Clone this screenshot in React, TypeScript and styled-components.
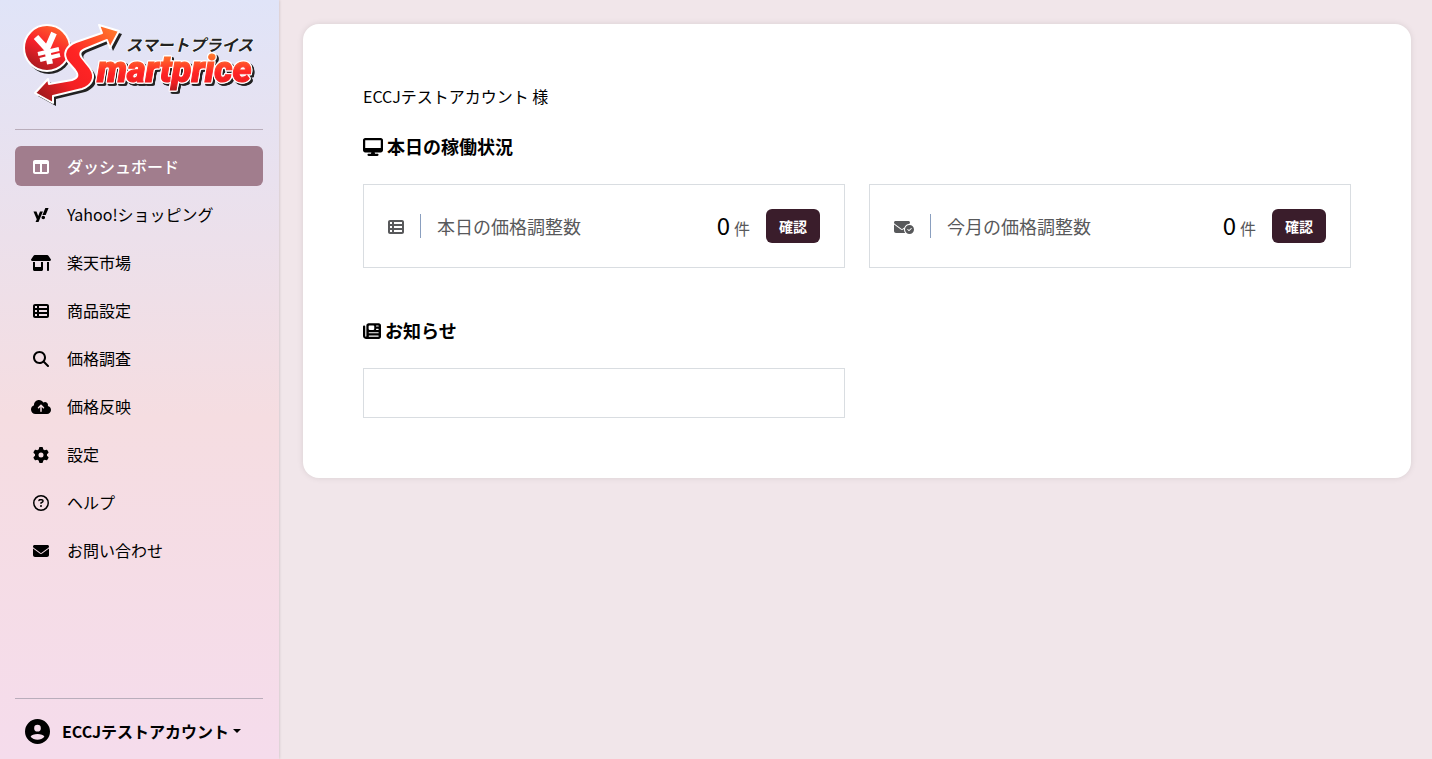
import React from 'react';
import styled, { createGlobalStyle } from 'styled-components';
import type { IconType } from 'react-icons';
import {
  FaCloudArrowUp,
  FaDesktop,
  FaEnvelope,
  FaEnvelopeCircleCheck,
  FaGear,
  FaMagnifyingGlass,
  FaNewspaper,
  FaRegCircleQuestion,
  FaShop,
  FaTableColumns,
  FaTableList,
  FaYahoo,
} from 'react-icons/fa6';

const GlobalStyle = createGlobalStyle`
  *, *::before, *::after { box-sizing: border-box; }
  body {
    margin: 0;
    background: #f1e6ea;
    color: #000;
    font-family: "Noto Sans CJK JP", "Noto Sans", sans-serif;
    font-size: 16px;
    line-height: 24px;
  }
`;

const Page = styled.div`
  display: flex;
  align-items: flex-start;
  min-height: 100vh;
`;

const Sidebar = styled.aside`
  position: sticky;
  top: 0;
  flex: 0 0 279px;
  display: flex;
  flex-direction: column;
  height: 100vh;
  padding: 20px 16px 12px 15px;
  background: linear-gradient(180deg, #e0e4f8 0%, #f5dde1 55%, #f5dcec 100%);
  box-shadow: 0 0 3px rgba(0, 0, 0, 0.2);
`;

const LogoLink = styled.a`
  display: block;
  height: 93px;
  svg { display: block; }
`;

const Divider = styled.hr`
  width: 100%;
  height: 1px;
  margin: 16px 0;
  border: 0;
  background: #b9adbb;
`;

const Nav = styled.nav`
  flex: 1;
`;

const NavList = styled.ul`
  display: flex;
  flex-direction: column;
  gap: 8px;
  margin: 0;
  padding: 0;
  list-style: none;
`;

const NavLink = styled.a<{ $active?: boolean }>`
  display: flex;
  align-items: center;
  gap: 16px;
  height: 40px;
  padding: 0 16px;
  border-radius: 6px;
  background: ${(p) => (p.$active ? '#a17d8d' : 'transparent')};
  color: ${(p) => (p.$active ? '#fff' : '#000')};
  font-weight: ${(p) => (p.$active ? 500 : 400)};
  text-decoration: none;
`;

const NavIcon = styled.span`
  display: flex;
  justify-content: center;
  width: 20px;
`;

const Glyph = styled.span<{ $width: number; $height: number }>`
  display: flex;
  flex: none;
  margin-top: 2px;
  svg {
    width: ${(p) => p.$width}px;
    height: ${(p) => p.$height}px;
  }
`;

const AccountButton = styled.button`
  display: flex;
  align-items: center;
  height: 32px;
  padding: 0 10px;
  border: 0;
  background: none;
  color: #000;
  font: inherit;
  font-weight: 700;
  cursor: pointer;
`;

const AccountName = styled.span`
  margin: 0 4px 0 12px;
`;

const Caret = styled.span`
  border-top: 4px solid currentColor;
  border-right: 4px solid transparent;
  border-left: 4px solid transparent;
`;

const Main = styled.main`
  flex: 1;
  min-width: 0;
  padding: 24px 21px 24px 24px;
`;

const Panel = styled.div`
  padding: 60px;
  border-radius: 16px;
  background: #fff;
  box-shadow: 0 0 6px rgba(0, 0, 0, 0.1);
`;

const Greeting = styled.p`
  margin: 0 0 24px;
`;

const Section = styled.section`
  & + & { margin-top: 48px; }
`;

const SectionTitle = styled.h2`
  display: flex;
  align-items: center;
  gap: 4px;
  margin: 0 0 24px;
  font-size: 18px;
  line-height: 28px;
  font-weight: 700;
`;

const Columns = styled.div`
  display: grid;
  grid-template-columns: 1fr 1fr;
  gap: 24px;
`;

const Box = styled.div`
  display: flex;
  align-items: center;
  min-height: 50px;
  padding: 24px;
  border: 1px solid #d9dde1;
`;

const StatLabel = styled.div`
  flex: 1;
  display: flex;
  align-items: center;
  gap: 16px;
  color: #58595b;
  font-size: 18px;
`;

const StatRule = styled.span`
  width: 1px;
  height: 24px;
  background: #8a9fbf;
`;

const StatValue = styled.div`
  display: flex;
  align-items: baseline;
  gap: 4px;
  margin-right: 16px;
`;

const Count = styled.span`
  font-size: 24px;
`;

const Unit = styled.span`
  color: #58595b;
`;

const ConfirmButton = styled.button`
  width: 54px;
  height: 34px;
  padding: 0;
  border: 0;
  border-radius: 6px;
  background: #3a1d2b;
  color: #fff;
  font: inherit;
  font-size: 14px;
  font-weight: 700;
  cursor: pointer;
`;

const Wordmark = styled.text`
  font-family: Roboto, sans-serif;
  font-size: 36px;
  font-weight: 900;
  font-style: italic;
  filter: drop-shadow(1px 0 0 #fff) drop-shadow(-1px 0 0 #fff) drop-shadow(0 1px 0 #fff)
    drop-shadow(0 -1px 0 #fff) drop-shadow(2px 2px 0 #222);
`;

const Tagline = styled.text`
  font-size: 16px;
  font-weight: 700;
  font-style: italic;
`;

const arrowPath =
  'M20 73 L33 59 L34 64 L57 60 C63 58 64 55 60 50 L53 42 C47 34 51 26 61 22 L87 13 L84 5 L104 11 L95 28 L92 20 L70 29 C65 31 64 34 67 38 L75 48 C82 58 76 66 67 69 L38 76 L38 83 Z';

function Logo() {
  return (
    <svg width="248" height="93" viewBox="0 0 248 93" role="img" aria-label="スマートプライス Smartprice">
      <defs>
        <linearGradient id="coin" x1="0.8" y1="0" x2="0.3" y2="1">
          <stop offset="0" stopColor="#ff6a2c" />
          <stop offset="0.5" stopColor="#f9222a" />
          <stop offset="1" stopColor="#a51a1e" />
        </linearGradient>
        <linearGradient id="arrow" gradientUnits="userSpaceOnUse" x1="100" y1="8" x2="26" y2="78">
          <stop offset="0" stopColor="#ff7a2b" />
          <stop offset="0.45" stopColor="#ff2424" />
          <stop offset="0.7" stopColor="#f42023" />
          <stop offset="1" stopColor="#9f1a1d" />
        </linearGradient>
        <linearGradient id="word" gradientUnits="userSpaceOnUse" x1="0" y1="34" x2="0" y2="72">
          <stop offset="0" stopColor="#ff7a2c" />
          <stop offset="0.5" stopColor="#ff2424" />
          <stop offset="0.75" stopColor="#f02022" />
          <stop offset="1" stopColor="#a81a1d" />
        </linearGradient>
      </defs>
      <circle cx="34" cy="31" r="23" fill="#222" />
      <circle cx="32" cy="28" r="23" fill="url(#coin)" stroke="#fff" strokeWidth="2" />
      <g fill="none" stroke="#fff">
        <path d="M21 17 L32 29 L39 13 M32 28 L35 44" strokeWidth="6" />
        <path d="M23 34 L44 29 M25 40 L45 35" strokeWidth="4" />
      </g>
      <path d={arrowPath} transform="translate(3 3)" fill="#222" />
      <path d={arrowPath} fill="url(#arrow)" stroke="#fff" strokeWidth="2" strokeLinejoin="round" />
      <Tagline x="111" y="31" fill="#222" stroke="#fff" strokeWidth="1" paintOrder="stroke">
        スマートプライス
      </Tagline>
      <Wordmark x="82" y="62" fill="url(#word)" stroke="url(#word)" strokeWidth="1">
        martprice
      </Wordmark>
    </svg>
  );
}

function AccountIcon() {
  return (
    <svg width="25" height="25" viewBox="0 0 24 24" fill="currentColor" aria-hidden="true">
      <path
        fillRule="evenodd"
        d="M12 0 A12 12 0 1 1 12 24 A12 12 0 1 1 12 0 Z M12 5.6 A3.2 3.2 0 1 0 12 12 A3.2 3.2 0 1 0 12 5.6 Z M5.4 17 C6 15.4 9 14.4 12 14.4 S18 15.4 18.6 17 C17 18.9 14.6 19.9 12 19.9 S7 18.9 5.4 17 Z"
      />
    </svg>
  );
}

const navItems: { label: string; icon: IconType; width: number; active?: boolean }[] = [
  { label: 'ダッシュボード', icon: FaTableColumns, width: 16, active: true },
  { label: 'Yahoo!ショッピング', icon: FaYahoo, width: 16 },
  { label: '楽天市場', icon: FaShop, width: 20 },
  { label: '商品設定', icon: FaTableList, width: 16 },
  { label: '価格調査', icon: FaMagnifyingGlass, width: 16 },
  { label: '価格反映', icon: FaCloudArrowUp, width: 20 },
  { label: '設定', icon: FaGear, width: 16 },
  { label: 'ヘルプ', icon: FaRegCircleQuestion, width: 16 },
  { label: 'お問い合わせ', icon: FaEnvelope, width: 16 },
];

const stats: { label: string; icon: IconType; width: number; count: number }[] = [
  { label: '本日の価格調整数', icon: FaTableList, width: 16, count: 0 },
  { label: '今月の価格調整数', icon: FaEnvelopeCircleCheck, width: 20, count: 0 },
];

export default function App() {
  return (
    <>
      <GlobalStyle />
      <Page>
        <Sidebar>
          <LogoLink href="#">
            <Logo />
          </LogoLink>
          <Divider />
          <Nav>
            <NavList>
              {navItems.map(({ label, icon: Icon, width, active }) => (
                <li key={label}>
                  <NavLink href="#" $active={active} aria-current={active ? 'page' : undefined}>
                    <NavIcon>
                      <Glyph $width={width} $height={16}>
                        <Icon />
                      </Glyph>
                    </NavIcon>
                    {label}
                  </NavLink>
                </li>
              ))}
            </NavList>
          </Nav>
          <Divider />
          <AccountButton type="button" aria-haspopup="menu">
            <AccountIcon />
            <AccountName>ECCJテストアカウント</AccountName>
            <Caret />
          </AccountButton>
        </Sidebar>
        <Main>
          <Panel>
            <Greeting>ECCJテストアカウント 様</Greeting>
            <Section>
              <SectionTitle>
                <Glyph $width={20} $height={18}>
                  <FaDesktop />
                </Glyph>
                本日の稼働状況
              </SectionTitle>
              <Columns>
                {stats.map(({ label, icon: Icon, width, count }) => (
                  <Box key={label}>
                    <StatLabel>
                      <Glyph $width={width} $height={16}>
                        <Icon />
                      </Glyph>
                      <StatRule />
                      {label}
                    </StatLabel>
                    <StatValue>
                      <Count>{count}</Count>
                      <Unit>件</Unit>
                    </StatValue>
                    <ConfirmButton type="button">確認</ConfirmButton>
                  </Box>
                ))}
              </Columns>
            </Section>
            <Section>
              <SectionTitle>
                <Glyph $width={18} $height={18}>
                  <FaNewspaper />
                </Glyph>
                お知らせ
              </SectionTitle>
              <Columns>
                <Box />
              </Columns>
            </Section>
          </Panel>
        </Main>
      </Page>
    </>
  );
}
